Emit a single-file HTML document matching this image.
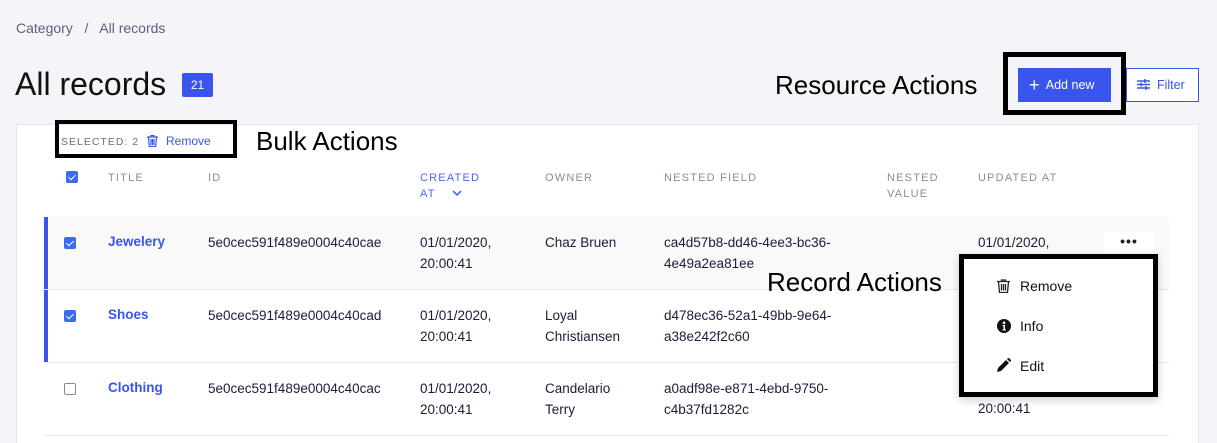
<!DOCTYPE html>
<html><head><style>
*{margin:0;padding:0;box-sizing:border-box}
html,body{width:1217px;height:443px;overflow:hidden}
body{background:#f4f4f9;font-family:"Liberation Sans",sans-serif;position:relative;color:#222}
.a{position:absolute;white-space:nowrap}
.th{font-size:11px;letter-spacing:1.2px;color:#8b8ba3;line-height:16px}
.td{font-size:13.5px;color:#1c1c38;line-height:21px}
.ttl{font-size:13.5px;color:#3a55ee;font-weight:bold}
.cb{position:absolute;width:12px;height:12px;border-radius:2px;background:#3a6bf0}
.cb:after{content:"";position:absolute;left:4px;top:1.5px;width:3px;height:6px;border:solid #fff;border-width:0 1.5px 1.5px 0;transform:rotate(45deg)}
.cbe{position:absolute;width:12px;height:12px;border-radius:2px;border:1px solid #888;background:#fff}
.sep{position:absolute;left:44px;width:1125px;height:1px;background:#e8e8ee}
.big{font-size:26px;color:#000}
</style></head><body>
<div class="a" style="left:16px;top:20px;font-size:14px;color:#5e5e7e">Category &nbsp;&nbsp;/&nbsp;&nbsp; All records</div>
<div class="a" style="left:15px;top:66px;font-size:32px;color:#111">All records</div>
<div class="a" style="left:182px;top:73px;width:31px;height:24px;background:#3a55ee;border-radius:2px;color:#fff;font-size:12px;text-align:center;line-height:24px">21</div>
<div class="a big" style="left:775px;top:70px">Resource Actions</div>
<div class="a" style="left:1003px;top:52px;width:123px;height:63px;border:5px solid #000"></div>
<div class="a" style="left:1018px;top:68px;width:93px;height:34px;background:#3a55ee;color:#fff;font-size:12.5px;line-height:34px;padding-left:11px"><span style="font-size:18px;font-weight:200;vertical-align:-2px">+</span>&nbsp; Add new</div>
<div class="a" style="left:1126px;top:68px;width:73px;height:34px;background:#fff;border:1px solid #3a55ee;color:#3a55ee;font-size:12.5px;line-height:32px;padding-left:10px"><svg width="13" height="11" style="vertical-align:-1px" stroke="#3a55ee" stroke-width="1.5"><path d="M0 2h13M0 5.5h13M0 9h13"/><path d="M8 0v4M4 3.5v4M9 7v4"/></svg>&nbsp; Filter</div>

<div class="a" style="left:16px;top:124px;width:1183px;height:330px;background:#fff;border:1px solid #e6e6ee"></div>
<div class="a" style="left:55px;top:120px;width:182px;height:38px;border:4px solid #000"></div>
<div class="a th" style="left:61px;top:134px;font-size:10.5px;letter-spacing:1px;color:#6b6b85">SELECTED: 2</div>
<svg class="a" style="left:147px;top:135px" width="11" height="12" fill="none" stroke="#3a55ee" stroke-width="1.2"><path d="M0 2h11M4 2V0.5h3V2M1.5 2l.8 9.5h6.4L9.5 2M4 4v6M5.5 4v6M7 4v6"/></svg>
<div class="a" style="left:166px;top:134px;font-size:12px;color:#3a55ee">Remove</div>
<div class="a big" style="left:256px;top:126px">Bulk Actions</div>

<div class="cb" style="left:66px;top:171px"></div>
<div class="a th" style="left:108px;top:170px">TITLE</div>
<div class="a th" style="left:208px;top:170px">ID</div>
<div class="a th" style="left:420px;top:170px;color:#4a68f0">CREATED<br>AT &nbsp;&nbsp;&nbsp;<svg width="10" height="7" fill="none" stroke="#4a68f0" stroke-width="1.6"><path d="M1 1l4 4 4-4"/></svg></div>
<div class="a th" style="left:545px;top:170px">OWNER</div>
<div class="a th" style="left:664px;top:170px">NESTED FIELD</div>
<div class="a th" style="left:887px;top:170px">NESTED<br>VALUE</div>
<div class="a th" style="left:978px;top:170px">UPDATED AT</div>

<div class="a" style="left:44px;top:217px;width:1125px;height:72px;background:#f9f9f9"></div>
<div class="a" style="left:44px;top:217px;width:4px;height:145px;background:#3a55ee"></div>
<div class="sep" style="top:289px"></div><div class="sep" style="top:362px"></div><div class="sep" style="top:435px"></div>

<div class="cb" style="left:64px;top:237px"></div>
<div class="a ttl" style="left:108px;top:234px">Jewelery</div>
<div class="a td" style="left:208px;top:232px">5e0cec591f489e0004c40cae</div>
<div class="a td" style="left:420px;top:232px">01/01/2020,<br>20:00:41</div>
<div class="a td" style="left:545px;top:232px">Chaz Bruen</div>
<div class="a td" style="left:664px;top:232px">ca4d57b8-dd46-4ee3-bc36-<br>4e49a2ea81ee</div>
<div class="a td" style="left:978px;top:232px">01/01/2020,</div>
<div class="a" style="left:1104px;top:232px;width:50px;height:20px;background:#fff;text-align:center;font-size:14px;line-height:18px;font-weight:bold;letter-spacing:1px">•••</div>

<div class="cb" style="left:64px;top:310px"></div>
<div class="a ttl" style="left:108px;top:307px">Shoes</div>
<div class="a td" style="left:208px;top:305px">5e0cec591f489e0004c40cad</div>
<div class="a td" style="left:420px;top:305px">01/01/2020,<br>20:00:41</div>
<div class="a td" style="left:545px;top:305px">Loyal<br>Christiansen</div>
<div class="a td" style="left:664px;top:305px">d478ec36-52a1-49bb-9e64-<br>a38e242f2c60</div>

<div class="cbe" style="left:64px;top:383px"></div>
<div class="a ttl" style="left:108px;top:380px">Clothing</div>
<div class="a td" style="left:208px;top:378px">5e0cec591f489e0004c40cac</div>
<div class="a td" style="left:420px;top:378px">01/01/2020,<br>20:00:41</div>
<div class="a td" style="left:545px;top:378px">Candelario<br>Terry</div>
<div class="a td" style="left:664px;top:378px">a0adf98e-e871-4ebd-9750-<br>c4b37fd1282c</div>
<div class="a td" style="left:978px;top:398px">20:00:41</div>

<div class="a big" style="left:767px;top:267px">Record Actions</div>
<div class="a" style="left:959px;top:254px;width:199px;height:143px;background:#fff;border:5px solid #000;box-shadow:0 3px 8px rgba(0,0,0,.2)"></div>
<svg class="a" style="left:997px;top:279px" width="13" height="14" fill="none" stroke="#222" stroke-width="1.3"><path d="M0 2.5h13M4.5 2.5V1h4v1.5M1.5 2.5l1 11h8l1-11M4.5 5v6.5M6.5 5v6.5M8.5 5v6.5"/></svg>
<div class="a" style="left:1020px;top:278px;font-size:14px;color:#111">Remove</div>
<svg class="a" style="left:997px;top:319px" width="14" height="14"><circle cx="7" cy="7" r="7" fill="#111"/><circle cx="7" cy="3.8" r="1.3" fill="#fff"/><path d="M5.5 6h2.5v4.5h1V11.5H5.5v-1h1V7h-1z" fill="#fff"/></svg>
<div class="a" style="left:1020px;top:318px;font-size:14px;color:#111">Info</div>
<svg class="a" style="left:997px;top:358px" width="14" height="14"><path d="M0 14l1-4 8-8 3 3-8 8zM10 1l1.5-1.5 3 3L13 4z" fill="#111"/></svg>
<div class="a" style="left:1020px;top:358px;font-size:14px;color:#111">Edit</div>
</body></html>
